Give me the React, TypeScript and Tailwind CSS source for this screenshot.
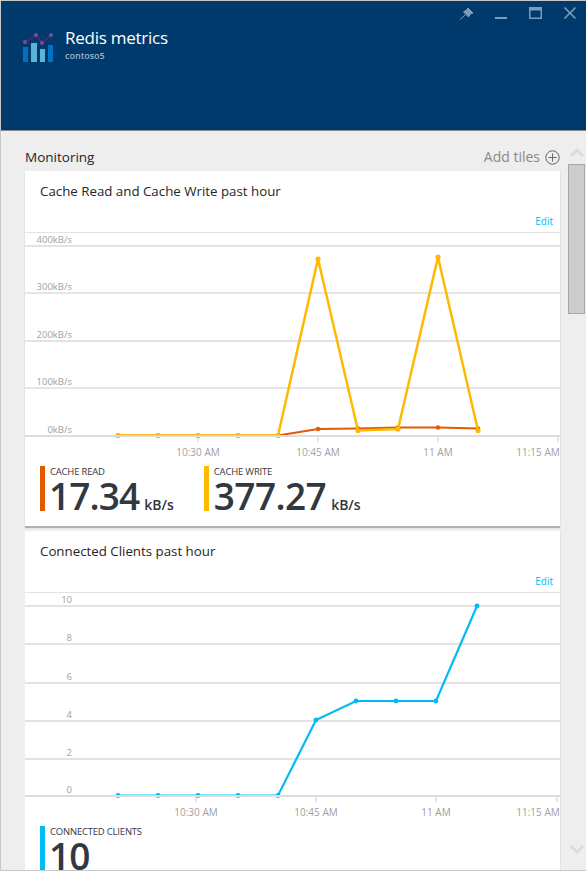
import React from 'react';

const font = { fontFamily: '"Open Sans", sans-serif' };

const readXs = [118, 158, 198, 238, 278, 318, 358, 398, 438, 478];
const clientXs = [118, 158, 198, 238, 278, 316, 356, 396, 436, 477];

function line(xs: number[], ys: number[], offsetX: number, offsetY: number) {
  return xs.map((x, i) => `${x - offsetX},${ys[i] - offsetY}`).join(' ');
}

function Logo() {
  return (
    <svg width="34" height="36" viewBox="0 0 34 36" className="shrink-0">
      <rect x="1" y="19" width="5" height="15" fill="#0072c6" />
      <rect x="9" y="15" width="6" height="19" fill="#59b4d9" />
      <rect x="18" y="21" width="5" height="13" fill="#59b4d9" />
      <rect x="26" y="17" width="5" height="17" fill="#0072c6" />
      <polyline points="3,14 14,7 20,15 29,7" fill="none" stroke="#68217a" strokeWidth="1.3" />
      <circle cx="3" cy="14" r="2" fill="#804998" />
      <circle cx="14" cy="7" r="2" fill="#804998" />
      <circle cx="20" cy="15" r="2" fill="#804998" />
      <circle cx="29" cy="7" r="2" fill="#804998" />
    </svg>
  );
}

function WindowControls() {
  return (
    <div className="flex justify-end pt-[6px] pr-[9px] h-[20px]">
      <svg width="130" height="14" viewBox="0 0 130 14">
        <path d="M21 1 L26 6 L23.5 7 L21.5 10 L16.5 5 L19.5 3 Z M18 8 L13 12.5" fill="#7d9cb8" stroke="#7d9cb8" strokeWidth="1" />
        <rect x="48" y="10" width="12" height="2" fill="#7d9cb8" />
        <rect x="82.75" y="0.75" width="11.5" height="10.5" fill="none" stroke="#7d9cb8" strokeWidth="1.5" />
        <rect x="82" y="0" width="13" height="3.5" fill="#7d9cb8" />
        <path d="M117.5 0.5 L128.5 11.5 M128.5 0.5 L117.5 11.5" stroke="#7d9cb8" strokeWidth="1.6" />
      </svg>
    </div>
  );
}

function Chart({
  gridYs,
  allMajor,
  yLabels,
  xLabels,
  series,
  topY,
  tickXs,
}: {
  gridYs: number[];
  allMajor?: boolean;
  yLabels: string[];
  xLabels: { x: number; label: string }[];
  series: { color: string; xs: number[]; ys: number[]; width: number; dot: number }[];
  topY: number;
  tickXs: number[];
}) {
  const baseY = gridYs[gridYs.length - 1] - topY;
  return (
    <svg width="535" height="232" viewBox="0 0 535 232" className="block">
      <line x1="0" x2="535" y1="0" y2="0" stroke="#e3e3e3" strokeWidth="2" />
      {gridYs.slice(0, -1).map((y, i) => {
        const major = allMajor || i % 2 === 0;
        return (
          <line
            key={y}
            x1="0"
            x2="535"
            y1={y - topY}
            y2={y - topY}
            stroke={major ? '#e3e3e3' : '#cccccc'}
            strokeWidth={major ? 2 : 1}
          />
        );
      })}
      {tickXs.map((x) => (
        <line key={x} x1={x - 25} x2={x - 25} y1={baseY} y2={baseY + 6} stroke="#cccccc" />
      ))}
      {yLabels.map((label, i) => (
        <text key={label} x="47" y={gridYs[i] - topY - 3} textAnchor="end" fontSize="9.5" fill="#a0a0a0" style={font}>
          {label}
        </text>
      ))}
      {xLabels.map((t) => (
        <text key={t.label} x={t.x - 25} y={baseY + 20} textAnchor="middle" fontSize="10" fill="#a0a0a0" style={font}>
          {t.label}
        </text>
      ))}
      {series.map((s) => (
        <g key={s.color}>
          <polyline points={line(s.xs, s.ys, 25, topY)} fill="none" stroke={s.color} strokeWidth={s.width} />
          {s.xs.map((x, i) => (
            <circle key={x} cx={x - 25} cy={s.ys[i] - topY} r={s.dot} fill={s.color} />
          ))}
        </g>
      ))}
      <line x1="0" x2="535" y1={baseY} y2={baseY} stroke="#dcdcdc" strokeWidth="2" />
    </svg>
  );
}

function Metric({ color, label, value, unit, clipped, wide }: { color: string; label: string; value: string; unit?: string; clipped?: boolean; wide?: boolean }) {
  return (
    <div className="flex h-[45px] items-stretch" style={font}>
      <div className="w-[5px] shrink-0" style={{ backgroundColor: color }} />
      <div className="ml-[5px] text-[#32383f]">
        <div className="text-[9.5px] leading-[11px] tracking-[-0.2px] uppercase">{label}</div>
        <div className={clipped ? 'flex items-baseline h-[33px] overflow-hidden' : 'flex items-baseline'}>
          <span className={wide ? 'text-[37px] leading-[37px] font-semibold tracking-[-0.6px]' : 'text-[37px] leading-[37px] ml-[-1px] font-semibold tracking-[-0.9px]'}>{value}</span>
          {unit && <span className="ml-[5px] text-[14px] font-semibold">{unit}</span>}
        </div>
      </div>
    </div>
  );
}

function CardHead({ title }: { title: string }) {
  return (
    <div className="h-[61px] relative shrink-0" style={font}>
      <div className="pl-[15px] pt-[11px] text-[13.3px] leading-[18px] text-[#252525]">{title}</div>
      <div className="absolute right-[7px] top-[43px] text-[10px] leading-[14px] text-[#00bcf2]">Edit</div>
    </div>
  );
}

export default function App() {
  return (
    <div className="w-[586px] h-[871px] overflow-hidden bg-[#eeeeee] flex flex-col border-b border-[#c8c8c8]" style={font}>
      <div className="h-[131px] shrink-0 bg-[#003a6c] border-t border-l border-b border-t-[#c8c8c8] border-l-[#c8c8c8] border-b-[#8a8a8a]">
        <WindowControls />
        <div className="flex pl-[21px] pt-[7px]">
          <Logo />
          <div className="ml-[9px] mt-[-1px]">
            <div className="text-[17px] leading-[22px] tracking-[-0.25px] text-white">Redis metrics</div>
            <div className="text-[9px] leading-[14px] text-[#9db4c9] font-semibold">contoso5</div>
          </div>
        </div>
      </div>
      <div className="flex-1 flex border-l border-[#c8c8c8] min-h-0">
        <div className="w-[560px] shrink-0 pl-[24px] overflow-hidden">
          <div className="h-[40px] pt-[17px] flex justify-between items-start">
            <div className="text-[13.5px] leading-[18px] text-[#252525]">Monitoring</div>
            <div className="flex items-center gap-[5px] text-[#8a8a8a] text-[14px] leading-[18px] pr-[1px]">
              <span>Add tiles</span>
              <svg width="15" height="15" viewBox="0 0 15 15">
                <circle cx="7.5" cy="7.5" r="6.7" fill="none" stroke="#666666" strokeWidth="1" />
                <path d="M7.5 3.5V11.5M3.5 7.5H11.5" stroke="#666666" strokeWidth="1" />
              </svg>
            </div>
          </div>
          <div className="bg-white w-[535px] h-[355px] shadow-[1px_0_0_#e3e3e3,0_2px_1px_#b0b0b0] flex flex-col">
            <CardHead title="Cache Read and Cache Write past hour" />
            <Chart
              topY={232}
              gridYs={[246, 293, 341, 388, 436]}
              yLabels={['400kB/s', '300kB/s', '200kB/s', '100kB/s', '0kB/s']}
              xLabels={[
                { x: 198, label: '10:30 AM' },
                { x: 318, label: '10:45 AM' },
                { x: 438, label: '11 AM' },
                { x: 538, label: '11:15 AM' },
              ]}
              tickXs={[198, 318, 438, 558]}
              series={[
                { color: '#e25a00', xs: readXs, ys: [435.5, 435.5, 435.5, 435.5, 435.5, 429, 428.5, 427.5, 427.5, 428.5], width: 2, dot: 2.2 },
                { color: '#ffb900', xs: readXs, ys: [435.5, 435.5, 435.5, 435.5, 435.5, 259, 430.5, 429, 257, 430.5], width: 2.5, dot: 2.6 },
              ]}
            />
            <div className="flex gap-[30px] pl-[15px] mt-[2px]">
              <Metric color="#e25a00" label="Cache Read" value="17.34" unit="kB/s" />
              <Metric color="#ffb900" label="Cache Write" value="377.27" unit="kB/s" wide />
            </div>
          </div>
          <div className="bg-white w-[535px] h-[340px] mt-[5px] shadow-[1px_0_0_#e3e3e3] flex flex-col">
            <CardHead title="Connected Clients past hour" />
            <Chart
              topY={592}
              allMajor
              gridYs={[606, 644, 683, 721, 759, 796]}
              yLabels={['10', '8', '6', '4', '2', '0']}
              xLabels={[
                { x: 196, label: '10:30 AM' },
                { x: 316, label: '10:45 AM' },
                { x: 436, label: '11 AM' },
                { x: 538, label: '11:15 AM' },
              ]}
              tickXs={[196, 316, 436, 557]}
              series={[{ color: '#00bcf2', xs: clientXs, ys: [795.5, 795.5, 795.5, 795.5, 795.5, 720, 701, 701, 701, 606], width: 2.2, dot: 2.4 }]}
            />
            <div className="pl-[15px] mt-[2px]">
              <Metric color="#00bcf2" label="Connected Clients" value="10" clipped />
            </div>
          </div>
        </div>
        <div className="w-[25px] shrink-0 flex flex-col items-start pl-[7px]">
          <svg width="14" height="10" viewBox="0 0 14 10" className="mt-[17px] ml-[2px]">
            <path d="M1 8 L7 2 L13 8" fill="none" stroke="#dcdcdc" strokeWidth="3" />
          </svg>
          <div className="w-[17px] h-[150px] mt-[6px] bg-[#cdcdcd] border border-[#a6a6a6]" />
          <div className="flex-1" />
          <svg width="14" height="10" viewBox="0 0 14 10" className="mb-[16px] ml-[2px]">
            <path d="M1 2 L7 8 L13 2" fill="none" stroke="#dcdcdc" strokeWidth="3" />
          </svg>
        </div>
      </div>
    </div>
  );
}
